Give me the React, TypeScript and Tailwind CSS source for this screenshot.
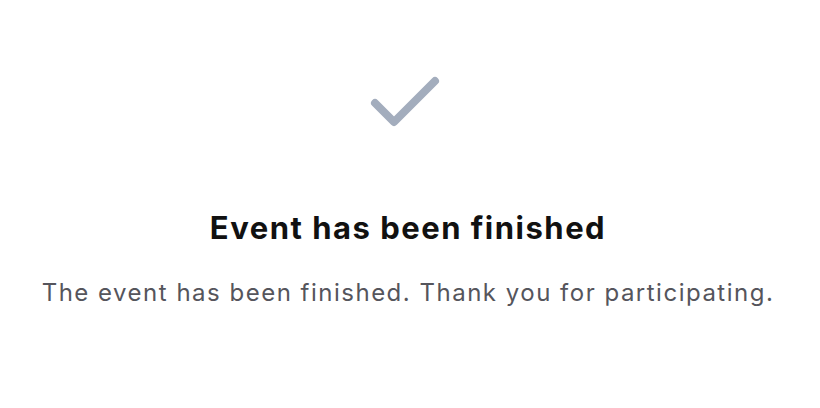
import React from 'react';

const CheckIcon = () => (
    <svg width="80" height="60" viewBox="0 0 80 60" fill="none">
        <path
            d="M5 33 L24 52 L65 11"
            stroke="#a3adbd"
            strokeWidth="8"
            strokeLinecap="round"
            strokeLinejoin="round"
        />
    </svg>
);

const App = () => {
    return (
        <div className="w-[820px] h-[408px] bg-white flex flex-col items-center pt-[70px] font-['Inter',sans-serif]">
            <CheckIcon />
            <h1 className="mt-[80px] text-[31px] leading-[36px] font-bold tracking-[1.5px] text-[#111111] translate-x-[-2px]">
                Event has been finished
            </h1>
            <p className="mt-[32px] text-[24px] leading-[30px] tracking-[1.5px] text-[#55555c] translate-x-[-2px]">
                The event has been finished. Thank you for participating.
            </p>
        </div>
    );
};

export default App;
